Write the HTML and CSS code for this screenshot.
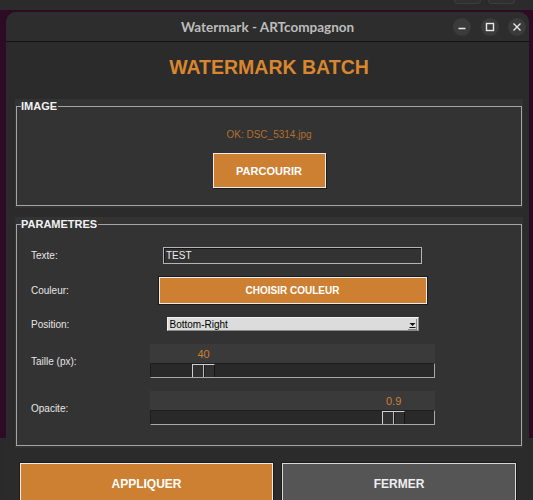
FILE: index.html
```html
<!DOCTYPE html>
<html lang="fr">
<head>
  <meta charset="UTF-8">
  <meta name="viewport" content="width=device-width, initial-scale=1.0">
  <title>Watermark - ARTcompagnon</title>
  <link rel="stylesheet" href="styles.css">
</head>
<body>
  <div class="topbar">
    <span class="dock-btn"></span>
    <span class="dock-btn"></span>
  </div>

  <div class="backdrop">
    <div class="window">
      <header class="titlebar">
        <span class="title">Watermark - ARTcompagnon</span>
        <div class="controls">
          <span class="ctl">
            <svg width="18" height="18" viewBox="0 0 18 18"><path d="M5.5 10.5h7" stroke="#e8e8e8" stroke-width="1.4" fill="none"/></svg>
          </span>
          <span class="ctl">
            <svg width="18" height="18" viewBox="0 0 18 18"><rect x="5.5" y="5.5" width="7" height="7" stroke="#e8e8e8" stroke-width="1.4" fill="none"/></svg>
          </span>
          <span class="ctl">
            <svg width="18" height="18" viewBox="0 0 18 18"><path d="M5.5 5.5l7 7M12.5 5.5l-7 7" stroke="#e8e8e8" stroke-width="1.4" fill="none"/></svg>
          </span>
        </div>
      </header>

      <main class="content">
        <h1>WATERMARK BATCH</h1>

        <div class="band">
          <fieldset class="group">
            <legend>IMAGE</legend>
            <div class="image-body">
              <span class="file">OK: DSC_5314.jpg</span>
              <button class="btn browse">PARCOURIR</button>
            </div>
          </fieldset>
        </div>

        <div class="band">
          <fieldset class="group">
            <legend>PARAMETRES</legend>
            <div class="params">
              <label for="wm-text">Texte:</label>
              <input class="entry" id="wm-text" type="text" value="TEST">

              <label>Couleur:</label>
              <button class="btn color-btn">CHOISIR COULEUR</button>

              <label>Position:</label>
              <div class="select">
                <span class="select-text">Bottom-Right</span>
                <span class="select-arrow">
                  <svg width="9" height="11" viewBox="0 0 9 11"><path d="M1.5 4h6l-3 3z" fill="#111"/><path d="M1.5 8.5h6" stroke="#111" stroke-width="1"/></svg>
                </span>
              </div>

              <label>Taille (px):</label>
              <div class="scale" style="--pos: 0.158">
                <div class="scale-value"><span>40</span></div>
                <div class="trough"><span class="thumb"></span></div>
              </div>

              <label>Opacite:</label>
              <div class="scale" style="--pos: 0.889">
                <div class="scale-value"><span>0.9</span></div>
                <div class="trough"><span class="thumb"></span></div>
              </div>
            </div>
          </fieldset>
        </div>

        <div class="actions">
          <button class="btn big">APPLIQUER</button>
          <button class="btn big grey">FERMER</button>
        </div>
      </main>
    </div>
  </div>
</body>
</html>
```

FILE: styles.css
```css
* {
  box-sizing: border-box;
}

html,
body {
  margin: 0;
  height: 100%;
}

body {
  background-color: #2b2b2b;
  font-family: "Liberation Sans", Arial, sans-serif;
  overflow: hidden;
}

/* desktop strip above the window */
.topbar {
  height: 10px;
  display: flex;
  justify-content: flex-end;
  gap: 7px;
  padding-right: 18px;
  background-color: #2b2b2b;
}

.dock-btn {
  width: 27px;
  height: 4px;
  border: 1px solid #3e3e3e;
  border-top: none;
  border-radius: 0 0 6px 6px;
  background-color: #303030;
}

.backdrop {
  height: 490px;
  padding: 2px 4px 0 6px;
  background: linear-gradient(#2e0b25 0 428px, #2a2a2a 428px);
}

.window {
  width: 523px;
  height: 100%;
  background-color: #2b2b2b;
  border-radius: 10px 10px 0 0;
  overflow: hidden;
}

.titlebar {
  height: 30px;
  display: grid;
  grid-template-columns: 1fr auto 1fr;
  align-items: center;
  background-color: #2d2d2d;
  border-bottom: 1px solid #111;
}

.title {
  grid-column: 2;
  color: #bdbdbd;
  font-family: Lato, "Noto Sans", sans-serif;
  font-weight: 700;
  font-size: 13.5px;
}

.controls {
  grid-column: 3;
  justify-self: end;
  display: flex;
  gap: 9.5px;
  padding-right: 3px;
}

.ctl {
  width: 18px;
  height: 18px;
  border-radius: 50%;
  background-color: #3b3b3b;
}

.ctl svg {
  display: block;
}

.content {
  padding: 14px 6px 0 9px;
}

h1 {
  margin: 0 0 21px;
  text-align: center;
  font-size: 19.5px;
  line-height: 22px;
  color: #d9862f;
}

/* labelled frames */
.band {
  background-color: #333;
  padding: 1px 1px 2px;
}

.band + .band {
  margin-top: 9px;
}

.group {
  margin: 0;
  padding: 0;
  min-width: 0;
  border: 1px solid #a5a5a5;
}

.group legend {
  margin-left: 4px;
  padding: 0 1px 0 0;
  font-size: 11px;
  line-height: 13px;
  font-weight: bold;
  color: #f2f2f2;
}

.image-body {
  display: flex;
  flex-direction: column;
  align-items: center;
  gap: 11px;
  padding: 15px 0 17px;
}

.file {
  font-size: 10px;
  line-height: 14px;
  color: #b07030;
}

.btn {
  padding: 0;
  font-family: inherit;
  font-weight: bold;
  color: #fff;
  background-color: #cd7f32;
  border: 1px solid #ececec;
  box-shadow: 1px 1px 0 #1b1b1b;
}

.browse {
  width: 113px;
  height: 35px;
  font-size: 11px;
}

.params {
  display: grid;
  grid-template-columns: 119px 285px;
  row-gap: 13px;
  align-items: center;
  padding: 16px 0 20px 14px;
}

.params label {
  font-size: 10px;
  color: #e6e6e6;
}

.entry {
  justify-self: center;
  width: 259px;
  height: 17px;
  padding: 0 2px;
  font-family: inherit;
  font-size: 10px;
  color: #eee;
  background-color: #333;
  border: 1px solid #b4b4b4;
  box-shadow: inset 1px 1px 0 #161616;
  outline: none;
}

.color-btn {
  justify-self: center;
  width: 268px;
  height: 27px;
  font-size: 10px;
  box-shadow: 0 0 0 1px #1c1c1c;
}

.select {
  justify-self: center;
  width: 252px;
  height: 14px;
  display: flex;
  align-items: center;
  justify-content: space-between;
  background-color: #dcdcdc;
  border: 1px solid #f2f2f2;
  border-right-color: #8a8a8a;
  border-bottom-color: #8a8a8a;
}

.select-text {
  padding-left: 2px;
  font-size: 10px;
  color: #000;
}

.select-arrow {
  width: 9px;
  height: 11px;
  margin-right: 1px;
  border-right: 1px solid #888;
  border-bottom: 1px solid #888;
}

.select-arrow svg {
  display: block;
}

/* sliders */
.scale {
  width: 285px;
  background-color: #3a3a3a;
}

.scale-value {
  height: 19px;
  padding-left: calc(var(--pos) * (100% - 25px) + 1px);
}

.scale-value span {
  display: block;
  width: 23px;
  text-align: center;
  font-size: 11px;
  line-height: 20px;
  color: #cd7f32;
}

.trough {
  height: 15px;
  padding-left: calc(var(--pos) * (100% - 25px));
  background-color: #292929;
  border-top: 1px solid #1d1d1d;
  border-left: 1px solid #1d1d1d;
  border-bottom: 1px solid #a8a8a8;
  border-right: 1px solid #a8a8a8;
}

.thumb {
  display: block;
  width: 23px;
  height: 13px;
  border-top: 1px solid #cfcfcf;
  border-left: 1px solid #cfcfcf;
  border-right: 1px solid #161616;
  background: linear-gradient(90deg, #303030 0 10px, #bdbdbd 10px 11px, #1a1a1a 11px 12px, #303030 12px);
}

.actions {
  display: grid;
  grid-template-columns: 253px 234px;
  gap: 9px;
  margin-top: 15px;
  padding-left: 5px;
}

.big {
  height: 41px;
  font-size: 12px;
  box-shadow: 0 0 0 1px #1b1b1b;
}

.grey {
  background-color: #555;
  border-color: #d8d8d8;
  color: #eee;
}
```
